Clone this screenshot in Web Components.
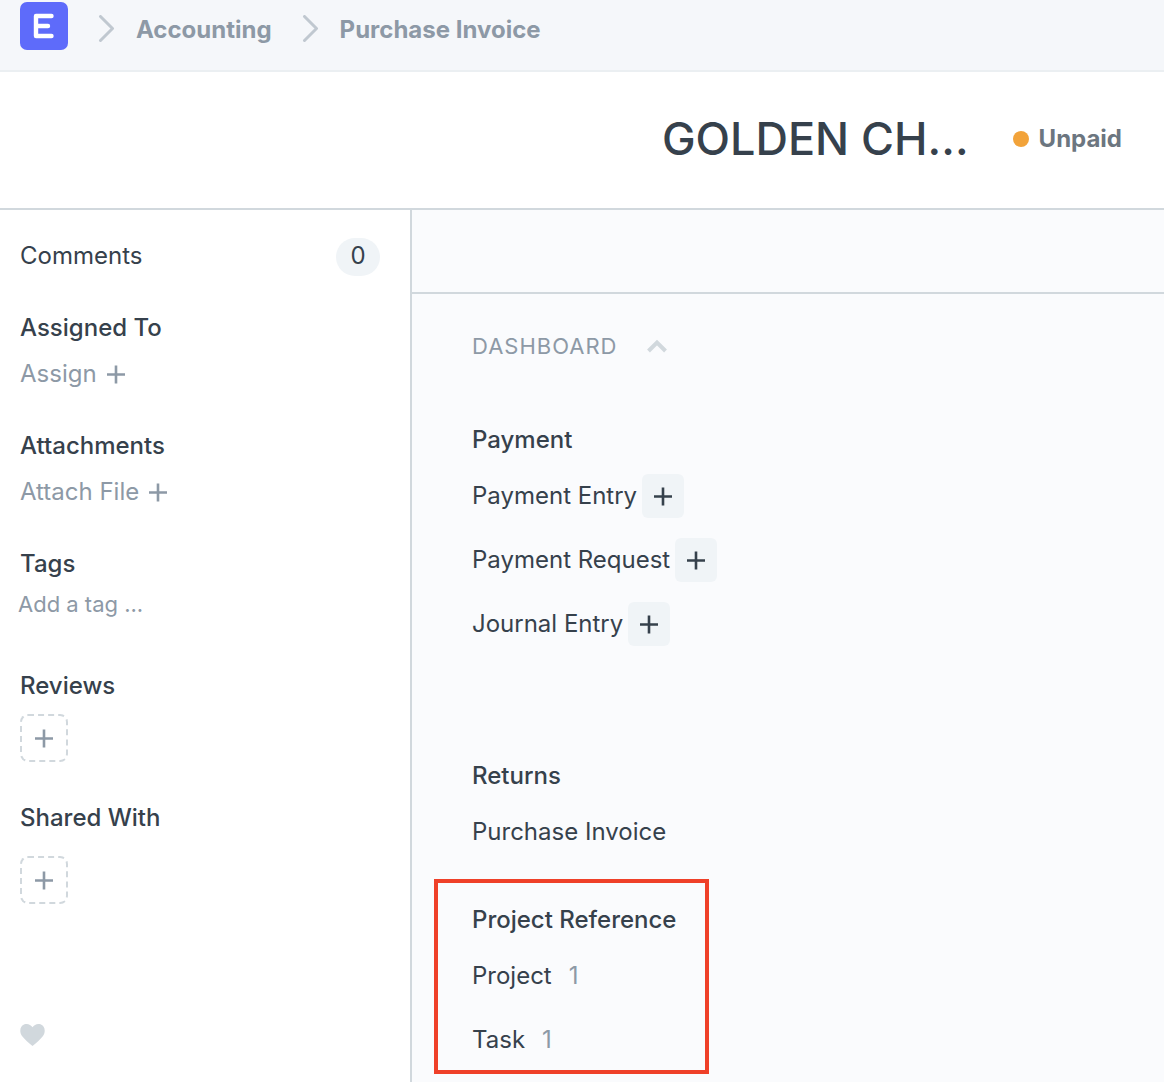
<!DOCTYPE html>
<html lang="en">
<head>
<meta charset="utf-8">
<meta name="viewport" content="width=device-width, initial-scale=1">
<title>Purchase Invoice</title>
<style>
  body {
    --text: #36414c;
    --muted: #8d99a6;
    --line: #d1d8dd;
    --control: #f0f4f7;
    --canvas: #fafbfd;
    margin: 0;
    color: var(--text);
    font: 400 24px/36px Inter, "Liberation Sans", sans-serif;
  }
</style>
</head>
<body>
<invoice-page></invoice-page>

<script>
const base = `
  * { box-sizing: border-box; }
  a { color: inherit; text-decoration: none; }
  button, input { margin: 0; padding: 0; border: 0; background: none; color: inherit; font: inherit; }
  button { cursor: pointer; }
  svg { display: block; flex: none; }
`;
const define = (name, css, html) => customElements.define(name, class extends HTMLElement {
  connectedCallback() {
    if (this.shadowRoot) return;
    const root = this.attachShadow({ mode: 'open' });
    const template = document.createElement('template');
    template.innerHTML = `<style>${base}${css}</style>${html(this)}`;
    root.append(template.content.cloneNode(true));
  }
});

define('plus-icon', `:host { display: block; flex: none; }`, () => `
  <svg width="20" height="20" viewBox="0 0 20 20" fill="none" stroke="currentColor" stroke-width="2.6" aria-hidden="true"><path d="M10 1.500v18M1 10.500h18"/></svg>`);

define('nav-crumb', `
  :host { display: flex; align-items: center; gap: 21px; color: var(--muted); font-weight: 700; }
  svg { color: #c0c8d0; }`, () => `
  <svg width="17" height="30" viewBox="0 0 17 30" fill="none" stroke="currentColor" stroke-width="3" stroke-linecap="round" stroke-linejoin="round" aria-hidden="true"><path d="M2.500 1.500l12 12L2.500 25.500"/></svg>
  <a href="#"><slot></slot></a>`);

define('nav-bar', `
  :host { display: block; background: #f5f7fa; border-bottom: 2px solid #ebeff2; }
  nav { display: flex; gap: 30px; height: 70px; padding: 2px 20px 12px; }`, () => `
  <nav aria-label="Breadcrumb">
    <a href="#" aria-label="Home">
      <svg width="48" height="48" viewBox="0 0 48 48"><rect width="48" height="48" rx="7" fill="#5e6bfa"/><path d="M31.500 14H16v20h15.500M16 24h12" fill="none" stroke="#fff" stroke-width="4.400" stroke-linecap="round" stroke-linejoin="round"/></svg>
    </a>
    <slot></slot>
  </nav>`);

define('status-pill', `
  :host { display: flex; align-items: center; gap: 10px; color: #6c7680; font-weight: 700; }
  i { width: 16px; height: 16px; border-radius: 50%; background: #f2a33a; }`, () => `<i></i><span><slot></slot></span>`);

define('page-head', `
  :host { display: flex; align-items: center; justify-content: flex-end; gap: 44px; height: 138px; padding: 0 42px 2px 20px; background: #fff; border-bottom: 2px solid #d1d8dd; box-sizing: border-box; }
  h1 { margin: 0; font-size: 45px; line-height: 60px; font-weight: 500; white-space: nowrap; }`, () => `
  <h1><slot></slot></h1><slot name="status"></slot>`);

define('side-group', `
  :host { display: block; margin-top: 36px; }
  h2 { margin: 0 0 10px; font: inherit; font-weight: 500; }`, el => `
  <h2>${el.getAttribute('heading')}</h2><slot></slot>`);

define('text-action', `
  :host { display: block; color: var(--muted); }
  button { display: flex; align-items: center; gap: 9px; }`, () => `
  <button type="button"><span><slot></slot></span><plus-icon></plus-icon></button>`);

define('dashed-add', `
  :host { display: block; color: var(--muted); }
  button { display: grid; place-items: center; width: 48px; height: 48px; border: 2px dashed var(--line); border-radius: 8px; }`, el => `
  <button type="button" aria-label="${el.getAttribute('label')}"><plus-icon></plus-icon></button>`);

define('tag-field', `
  :host { display: block; margin: -10px 0 0 -2px; }
  input { display: block; width: 100%; height: 44px; font-size: 22px; outline: 0; }
  input::placeholder { color: var(--muted); opacity: 1; }`, () => `
  <input type="text" placeholder="Add a tag ..." aria-label="Add a tag">`);

define('form-sidebar', `
  :host { display: flex; flex-direction: column; align-items: stretch; padding: 28px 30px 34px 20px; background: #fff; border-right: 2px solid var(--line); }
  .comments { display: flex; justify-content: space-between; }
  .badge { min-width: 44px; height: 38px; padding: 0 14px; border-radius: 19px; text-align: center; background: var(--control); }
  .like { align-self: flex-start; margin-top: 119px; color: var(--line); }
  side-group:first-of-type { margin-top: 34px; }
  .roomy { margin-top: 42px; }
  .spaced { margin-top: 38px; }
  .spaced dashed-add { margin-top: 20px; }`, () => `
  <a class="comments" href="#"><span>Comments</span><span class="badge">0</span></a>
  <side-group heading="Assigned To"><text-action>Assign</text-action></side-group>
  <side-group heading="Attachments"><text-action>Attach File</text-action></side-group>
  <side-group heading="Tags"><tag-field></tag-field></side-group>
  <side-group class="roomy" heading="Reviews"><dashed-add label="Add review"></dashed-add></side-group>
  <side-group class="spaced" heading="Shared With"><dashed-add label="Share"></dashed-add></side-group>
  <button class="like" type="button" aria-label="Like">
    <svg width="25" height="24" viewBox="0 0 25 24" fill="currentColor"><path d="M12.500 23C9 20 4.500 16.500 2 13C-1 8.500 0 3 4.500 1.300C7.500 0.200 10.800 1.500 12.500 4.300C14.200 1.500 17.500 0.200 20.500 1.300C25 3 26 8.500 23 13C20.500 16.500 16 20 12.500 23Z"/></svg>
  </button>`);

define('doc-link', `
  :host { display: flex; align-items: center; gap: 5px; height: 44px; }
  button { display: grid; place-items: center; width: 42px; height: 44px; border-radius: 6px; background: var(--control); }
  .count { margin-left: 12px; color: var(--muted); }`, el => `
  <a href="#"><slot></slot></a>
  ${el.hasAttribute('creatable') ? `<button type="button" aria-label="New ${el.textContent}"><plus-icon></plus-icon></button>` : ''}
  ${el.hasAttribute('count') ? `<span class="count">${el.getAttribute('count')}</span>` : ''}`);

define('link-group', `
  :host { display: block; position: relative; width: fit-content; }
  :host([marked])::after { content: ""; position: absolute; inset: -23px -33px -12px -38px; border: 4px solid #ef4029; pointer-events: none; box-sizing: border-box; }
  h3 { margin: 0 0 16px; font: inherit; font-weight: 500; }
  .links { display: flex; flex-direction: column; gap: 20px; }`, el => `
  <h3>${el.getAttribute('heading')}</h3><div class="links"><slot></slot></div>`);

define('form-dashboard', `
  :host { display: block; background: var(--canvas); min-width: 0; }
  .toolbar { height: 84px; border-bottom: 2px solid var(--line); }
  section { padding: 34px 60px 20px; }
  h2 { margin: 0 0 58px; font-size: 22px; font-weight: 400; line-height: 36px; color: var(--muted); }
  h2 button { display: flex; align-items: center; gap: 30px; letter-spacing: 1px; }
  h2 svg { color: var(--line); }
  link-group + link-group { margin-top: 48px; }
  link-group + .apart { margin-top: 112px; }`, () => `
  <div class="toolbar"></div>
  <section>
    <h2><button type="button" aria-expanded="true">DASHBOARD
      <svg width="20" height="14" viewBox="0 0 20 14" fill="none" stroke="currentColor" stroke-width="4" aria-hidden="true"><path d="M1.500 12L10 3.500L18.500 12"/></svg></button></h2>
    <link-group heading="Payment">
      <doc-link creatable>Payment Entry</doc-link>
      <doc-link creatable>Payment Request</doc-link>
      <doc-link creatable>Journal Entry</doc-link>
    </link-group>
    <link-group class="apart" heading="Returns">
      <doc-link>Purchase Invoice</doc-link>
    </link-group>
    <link-group marked heading="Project Reference">
      <doc-link count="1">Project</doc-link>
      <doc-link count="1">Task</doc-link>
    </link-group>
  </section>`);

define('invoice-page', `
  :host { display: flex; flex-direction: column; min-height: 100vh; }
  main { flex: 1; display: flex; }
  form-sidebar { flex: 0 0 412px; }
  form-dashboard { flex: 1; }`, () => `
  <nav-bar><nav-crumb>Accounting</nav-crumb><nav-crumb>Purchase Invoice</nav-crumb></nav-bar>
  <page-head>GOLDEN CH...<status-pill slot="status">Unpaid</status-pill></page-head>
  <main><form-sidebar></form-sidebar><form-dashboard></form-dashboard></main>`);
</script>
</body>
</html>
